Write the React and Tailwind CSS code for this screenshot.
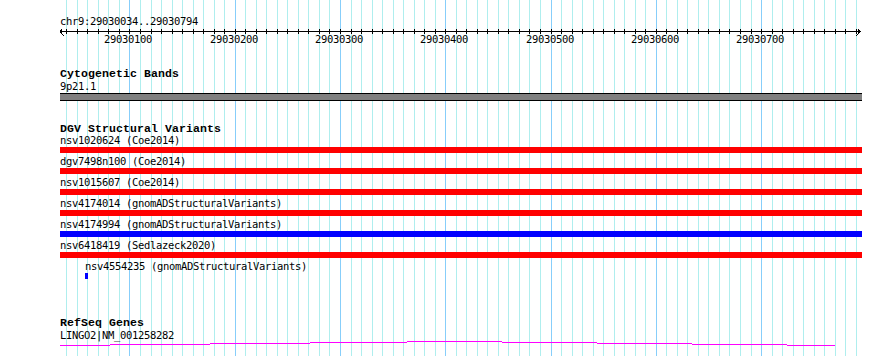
const START = 29030034;
const LEFT = 60;
const SCALE = 1.0526;
const toX = (bp) => Math.round(LEFT + (bp - START) * SCALE);

const gridStops = [];
for (let bp = 29030040; bp <= 29030790; bp += 10) gridStops.push(bp);
const majors = [29030100, 29030200, 29030300, 29030400, 29030500, 29030600, 29030700];

const variants = [
  { label: "nsv1020624 (Coe2014)", bar: "bg-[#ff0000]" },
  { label: "dgv7498n100 (Coe2014)", bar: "bg-[#ff0000]" },
  { label: "nsv1015607 (Coe2014)", bar: "bg-[#ff0000]" },
  { label: "nsv4174014 (gnomADStructuralVariants)", bar: "bg-[#ff0000]" },
  { label: "nsv4174994 (gnomADStructuralVariants)", bar: "bg-[#0000ff]" },
  { label: "nsv6418419 (Sedlazeck2020)", bar: "bg-[#ff0000]" },
];

// stepped intron "hat" of the gene model: [x0, x1, y]
const hat = [
  [60, 110, 4],
  [110, 210, 3],
  [210, 310, 2],
  [310, 407, 1],
  [407, 502, 0],
  [502, 597, 1],
  [597, 692, 2],
  [692, 787, 3],
  [787, 835, 4],
];

function Grid() {
  return (
    <svg className="absolute inset-0" width="890" height="356" shapeRendering="crispEdges">
      {gridStops.map((bp) => (
        <rect
          key={bp}
          x={toX(bp)}
          y="0"
          width="1"
          height="356"
          fill={bp % 100 === 0 ? "#87cefa" : "#afeeee"}
        />
      ))}
    </svg>
  );
}

function Ruler() {
  return (
    <svg width="802" height="20" className="block" shapeRendering="crispEdges">
      <rect x="0" y="2" width="800" height="1" fill="#000" />
      <polyline points="4,-2 0,2.5 4,7" fill="none" stroke="#000" strokeWidth="1" />
      <polyline points="796,-2 800,2.5 796,7" fill="none" stroke="#000" strokeWidth="1" />
      {gridStops.map((bp) => (
        <rect key={bp} x={toX(bp) - LEFT} y="0" width="1" height="5" fill="#000" />
      ))}
      {majors.map((bp) => (
        <text
          key={bp}
          x={toX(bp) - LEFT - 1}
          y="14"
          textAnchor="middle"
          fontFamily="DejaVu Sans Mono, monospace"
          fontSize="10.5"
          letterSpacing="-0.32"
          fill="#000"
        >
          {bp}
        </text>
      ))}
    </svg>
  );
}

function Title({ children, className = "" }) {
  return (
    <div className={`font-['Liberation_Mono',monospace] text-[11.5px] font-bold tracking-[0.1px] text-black ${className}`}>
      {children}
    </div>
  );
}

function Label({ children, className = "" }) {
  return (
    <div className={`font-['DejaVu_Sans_Mono',monospace] text-[10.5px] leading-[11px] tracking-[-0.32px] text-black whitespace-nowrap ${className}`}>
      {children}
    </div>
  );
}

export default function App() {
  return (
    <div className="relative w-[890px] h-[356px] overflow-hidden bg-white">
      <Grid />
      <div className="relative pl-[60px]">
        <Label className="mt-[16px] mb-[2px]">chr9:29030034..29030794</Label>
        <Ruler />

        <Title className="mt-[19px] leading-[12px]">Cytogenetic Bands</Title>
        <Label className="mt-[0.5px] mb-[1.5px]">9p21.1</Label>
        <div className="w-[802px] h-[8px] bg-[#808080] border-y border-black" />

        <Title className="mt-[21px] leading-[13px]">DGV Structural Variants</Title>
        {variants.map((v) => (
          <div key={v.label} className="mb-[3px]">
            <Label className="mb-[1px]">{v.label}</Label>
            <div className={`w-[802px] h-[6px] ${v.bar}`} />
          </div>
        ))}
        <Label className="pl-[25px] mb-[1px]">nsv4554235 (gnomADStructuralVariants)</Label>
        <div className="ml-[25px] w-[3px] h-[6px] bg-[#0000ff]" />

        <Title className="mt-[38px] leading-[12px]">RefSeq Genes</Title>
        <Label className="mt-[0.5px] mb-[0.5px]">LINGO2|NM_001258282</Label>
        <svg width="802" height="8" className="block" shapeRendering="crispEdges">
          {hat.map(([x0, x1, y]) => (
            <rect key={x0} x={x0 - LEFT} y={y} width={x1 - x0} height="1" fill="#ff00ff" />
          ))}
        </svg>
      </div>
    </div>
  );
}
